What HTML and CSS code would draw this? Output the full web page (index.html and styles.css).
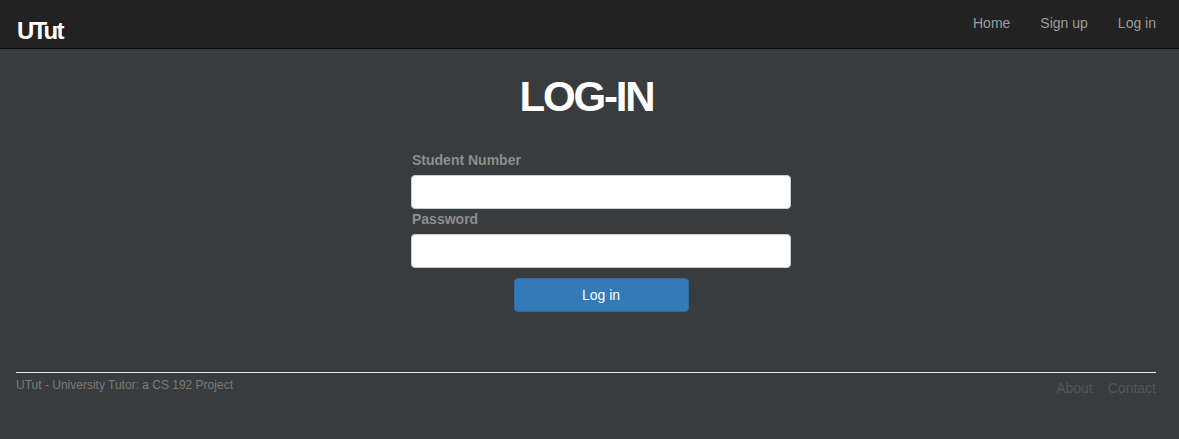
FILE: index.html
```html
<!DOCTYPE html>
<html lang="en">
<head>
<meta charset="utf-8">
<title>UTut - Log in</title>
<link rel="stylesheet" href="styles.css">
</head>
<body>
<nav class="navbar">
  <a class="brand" href="#">UTut</a>
  <ul class="nav-links">
    <li><a href="#">Home</a></li>
    <li><a href="#">Sign up</a></li>
    <li><a href="#">Log in</a></li>
  </ul>
</nav>
<main class="main">
  <h1 class="title">LOG-IN</h1>
  <form class="login-form">
    <label class="field-label" for="sn">Student Number</label>
    <input class="field-input" id="sn" type="text">
    <label class="field-label" for="pw">Password</label>
    <input class="field-input" id="pw" type="password">
    <div class="actions">
      <button class="btn-primary" type="button">Log in</button>
    </div>
  </form>
</main>
<footer class="footer">
  <span class="footer-note">UTut - University Tutor: a CS 192 Project</span>
  <div class="footer-links">
    <a href="#">About</a>
    <a href="#">Contact</a>
  </div>
</footer>
</body>
</html>
```

FILE: styles.css
```css
* { box-sizing: border-box; }
html, body { margin: 0; padding: 0; }
body {
  background: #383c3f;
  font-family: "Liberation Sans", Arial, sans-serif;
  font-size: 14px;
  line-height: 20px;
  color: #fff;
  min-height: 439px;
}
a { text-decoration: none; }

.navbar {
  display: flex;
  justify-content: space-between;
  align-items: flex-start;
  height: 49px;
  background: #222;
  border-bottom: 1px solid #080808;
  padding: 0 23px 0 17px;
}
.brand {
  color: #fff;
  font-weight: bold;
  font-size: 24px;
  line-height: 28px;
  letter-spacing: -1.8px;
  padding-top: 17px;
}
.nav-links {
  display: flex;
  list-style: none;
  margin: 0;
  padding: 13px 0 0;
  gap: 30px;
}
.nav-links a { color: #9d9d9d; }

.main { padding-top: 25px; }
.title {
  margin: 0 0 30px;
  padding-right: 6px;
  text-align: center;
  font-size: 42px;
  line-height: 46px;
  font-weight: bold;
  letter-spacing: -2.2px;
  color: #fff;
}
.login-form {
  width: 403px;
  margin: 0 auto;
  padding-left: 23px;
  display: flex;
  flex-direction: column;
  align-items: stretch;
}
.field-label {
  display: block;
  color: #8e8e8e;
  font-weight: bold;
  margin: 0 0 5px 1px;
}
.field-input {
  display: block;
  height: 34px;
  width: 380px;
  border: 1px solid #ccc;
  border-radius: 4px;
  background: #fff;
  font: inherit;
  padding: 6px 12px;
}
.actions {
  width: 380px;
  display: flex;
  justify-content: center;
  margin-top: 10px;
}
.btn-primary {
  width: 175px;
  height: 34px;
  background: #337ab7;
  border: 1px solid #2e6da4;
  border-radius: 4px;
  color: #fff;
  font-family: inherit;
  font-size: 14px;
  line-height: 20px;
  padding: 6px 12px;
}

.footer {
  margin: 60px 23px 0 16px;
  border-top: 1px solid #eee;
  padding-top: 4px;
  display: flex;
  justify-content: space-between;
  align-items: flex-start;
}
.footer-note {
  font-size: 12px;
  line-height: 17px;
  color: #7a7a7a;
}
.footer-links {
  display: flex;
  gap: 15px;
  margin-top: 1px;
}
.footer-links a { color: #555; }
```
